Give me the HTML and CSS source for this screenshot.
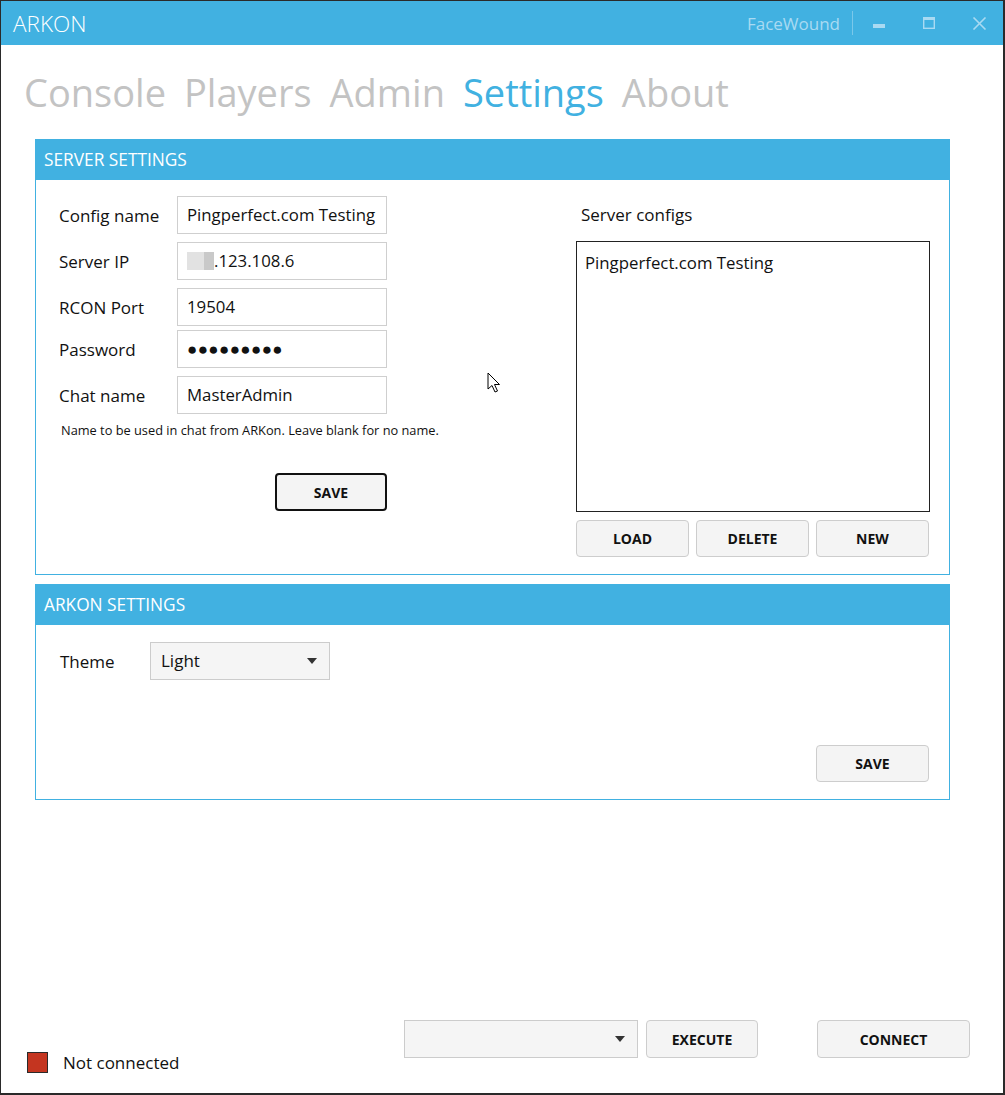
FILE: index.html
```html
<!DOCTYPE html>
<html lang="en">
<head>
    <meta charset="UTF-8">
    <title>ARKON</title>
    <link rel="stylesheet" href="styles.css">
</head>
<body>

<div class="window">
    <header class="titlebar">
        <span class="app-title">ARKON</span>
        <div class="title-right">
            <span class="user-name">FaceWound</span>
            <span class="title-sep"></span>
            <svg class="win-min" width="12" height="14" viewBox="0 0 12 14"><rect x="0" y="8" width="12" height="4" fill="currentColor"/></svg>
            <svg class="win-max" width="12" height="12" viewBox="0 0 12 12"><rect x="0.7" y="0.7" width="10.6" height="10.6" fill="none" stroke="currentColor" stroke-width="1.4"/><rect x="0" y="0" width="12" height="3" fill="currentColor"/></svg>
            <svg class="win-close" width="15" height="13" viewBox="0 0 15 13"><path d="M1.5 0.5 L13.5 12.5 M13.5 0.5 L1.5 12.5" stroke="currentColor" stroke-width="1.6" fill="none"/></svg>
        </div>
    </header>

    <main class="content">
        <nav class="tabs">
            <span class="tab">Console</span>
            <span class="tab">Players</span>
            <span class="tab">Admin</span>
            <span class="tab tab-active">Settings</span>
            <span class="tab">About</span>
        </nav>

        <section class="panel">
            <div class="panel-head">SERVER SETTINGS</div>
            <div class="panel-body server-body">
                <div class="form-col">
                    <div class="field">
                        <span class="field-label">Config name</span>
                        <div class="input">Pingperfect.com Testing</div>
                    </div>
                    <div class="field">
                        <span class="field-label">Server IP</span>
                        <div class="input"><span class="blur blur-a"></span><span class="blur blur-b"></span>.123.108.6</div>
                    </div>
                    <div class="field">
                        <span class="field-label">RCON Port</span>
                        <div class="input">19504</div>
                    </div>
                    <div class="field field-tight">
                        <span class="field-label">Password</span>
                        <div class="input"><span class="dots">●●●●●●●●●</span></div>
                    </div>
                    <div class="field">
                        <span class="field-label">Chat name</span>
                        <div class="input">MasterAdmin</div>
                    </div>
                    <p class="hint">Name to be used in chat from ARKon. Leave blank for no name.</p>
                    <div class="save-row">
                        <button class="btn btn-focus">SAVE</button>
                    </div>
                </div>

                <div class="configs-col">
                    <div class="configs-label">Server configs</div>
                    <div class="listbox">
                        <div class="list-item">Pingperfect.com Testing</div>
                    </div>
                    <div class="btn-row">
                        <button class="btn">LOAD</button>
                        <button class="btn">DELETE</button>
                        <button class="btn">NEW</button>
                    </div>
                </div>
            </div>
        </section>

        <section class="panel panel-arkon">
            <div class="panel-head">ARKON SETTINGS</div>
            <div class="panel-body arkon-body">
                <div class="theme-row">
                    <span class="theme-label">Theme</span>
                    <div class="combo theme-combo">Light<span class="combo-arrow"></span></div>
                </div>
                <button class="btn arkon-save">SAVE</button>
            </div>
        </section>

        <svg class="cursor" width="14" height="22" viewBox="0 0 14 22">
            <path d="M1 1 L1 17 L5 13.5 L8 20 L10.5 19 L7.5 12.5 L12.5 12.5 Z" fill="#fff" stroke="#000" stroke-width="1" stroke-linejoin="round"/>
        </svg>
    </main>

    <footer class="footer">
        <div class="status">
            <span class="status-box"></span>
            <span class="status-text">Not connected</span>
        </div>
        <div class="combo cmd-combo"><span class="combo-arrow"></span></div>
        <button class="btn exec-btn">EXECUTE</button>
        <button class="btn connect-btn">CONNECT</button>
    </footer>
</div>

</body>
</html>
```

FILE: styles.css
```css
* {
    box-sizing: border-box;
}
body {
    margin: 0;
    font-family: 'Open Sans', 'Noto Sans', sans-serif;
    background-color: #ffffff;
    color: #111;
}
.window {
    width: 1005px;
    height: 1095px;
    border: 1px solid #2a2a2a;
    border-right-width: 2px;
    border-bottom-width: 2px;
    display: flex;
    flex-direction: column;
    background-color: #fff;
}
.titlebar {
    height: 44px;
    flex: 0 0 44px;
    background-color: #41b1e1;
    display: flex;
    align-items: center;
    justify-content: space-between;
    padding: 0 16px 0 12px;
}
.app-title {
    color: #fff;
    font-size: 22.5px;
    font-weight: 300;
}
.title-right {
    display: flex;
    align-items: center;
    color: #a9daf2;
}
.user-name {
    font-size: 17px;
    margin-right: 12px;
}
.title-sep {
    width: 1px;
    height: 24px;
    background-color: rgba(255, 255, 255, 0.3);
    margin-right: 20px;
}
.win-max {
    margin-left: 38px;
}
.win-close {
    margin-left: 37px;
}
.content {
    position: relative;
    flex: 1;
    padding-left: 34px;
}
.tabs {
    height: 94px;
    padding-top: 20px;
    margin-left: -11px;
    display: flex;
    gap: 18px;
}
.tab {
    font-size: 38px;
    line-height: 54px;
    color: #c3c3c3;
}
.tab-active {
    color: #41b1e1;
}
.panel {
    width: 915px;
    border: 1px solid #41b1e1;
}
.panel-arkon {
    margin-top: 9px;
}
.panel-head {
    height: 40px;
    background-color: #41b1e1;
    color: #fff;
    font-size: 17.3px;
    line-height: 40px;
    padding-left: 8px;
}
.server-body {
    height: 394px;
    display: flex;
    justify-content: space-between;
    padding: 16px 19px 0 23px;
}
.form-col {
    width: 328px;
}
.field {
    display: flex;
    align-items: center;
    height: 38px;
    margin-bottom: 8px;
}
.field-tight {
    margin-top: -4px;
}
.field-label {
    width: 118px;
    font-size: 17px;
}
.input {
    width: 210px;
    height: 38px;
    border: 1px solid #cfcfcf;
    font-size: 16.8px;
    line-height: 36px;
    padding-left: 9px;
    white-space: nowrap;
    overflow: hidden;
    display: flex;
    align-items: center;
}
.blur {
    display: inline-block;
    height: 18px;
}
.blur-a {
    width: 17px;
    background-color: #e2e2e2;
}
.blur-b {
    width: 10px;
    background-color: #c9c9c9;
}
.dots {
    font-size: 17px;
    letter-spacing: 0.4px;
}
.hint {
    margin: 4px 0 0 2px;
    font-size: 12.8px;
    line-height: 16px;
    white-space: nowrap;
}
.save-row {
    display: flex;
    justify-content: flex-end;
    margin-top: 35px;
}
.btn {
    font-family: 'Open Sans', 'Noto Sans', sans-serif;
    font-weight: bold;
    font-size: 14px;
    color: #111;
    background-color: #f4f4f4;
    border: 1px solid #cdcdcd;
    border-radius: 4px;
    width: 113px;
    height: 37px;
    padding: 0;
}
.btn-focus {
    width: 112px;
    height: 38px;
    border: 2px solid #111;
}
.configs-col {
    width: 354px;
}
.configs-label {
    font-size: 17px;
    line-height: 38px;
    padding-left: 5px;
}
.listbox {
    margin-top: 7px;
    height: 271px;
    border: 1px solid #222;
    padding: 11px 8px;
}
.list-item {
    font-size: 16.8px;
    line-height: 20px;
}
.btn-row {
    display: flex;
    gap: 7px;
    margin-top: 8px;
}
.arkon-body {
    height: 174px;
    display: flex;
    flex-direction: column;
    padding: 17px 20px 17px 24px;
}
.theme-row {
    display: flex;
    align-items: center;
}
.theme-label {
    width: 90px;
    font-size: 17px;
}
.combo {
    position: relative;
    height: 38px;
    background-color: #f5f5f5;
    border: 1px solid #cccccc;
    font-size: 17px;
    line-height: 36px;
    padding-left: 10px;
}
.theme-combo {
    width: 180px;
}
.combo-arrow {
    position: absolute;
    right: 12px;
    top: 15px;
    border-left: 5px solid transparent;
    border-right: 5px solid transparent;
    border-top: 6px solid #333;
}
.arkon-save {
    margin-top: auto;
    align-self: flex-end;
}
.cursor {
    position: absolute;
    left: 486px;
    top: 327px;
}
.footer {
    height: 73px;
    flex: 0 0 73px;
    display: flex;
    align-items: flex-start;
    padding-left: 26px;
}
.status {
    width: 377px;
    margin-top: 31px;
    display: flex;
    align-items: center;
}
.status-box {
    width: 21px;
    height: 21px;
    background-color: #c43520;
    border: 1px solid #2a2a2a;
}
.status-text {
    margin-left: 15px;
    font-size: 17px;
}
.cmd-combo {
    width: 234px;
}
.exec-btn {
    margin-left: 8px;
    width: 112px;
    height: 38px;
}
.connect-btn {
    margin-left: 59px;
    width: 153px;
    height: 38px;
}
```
